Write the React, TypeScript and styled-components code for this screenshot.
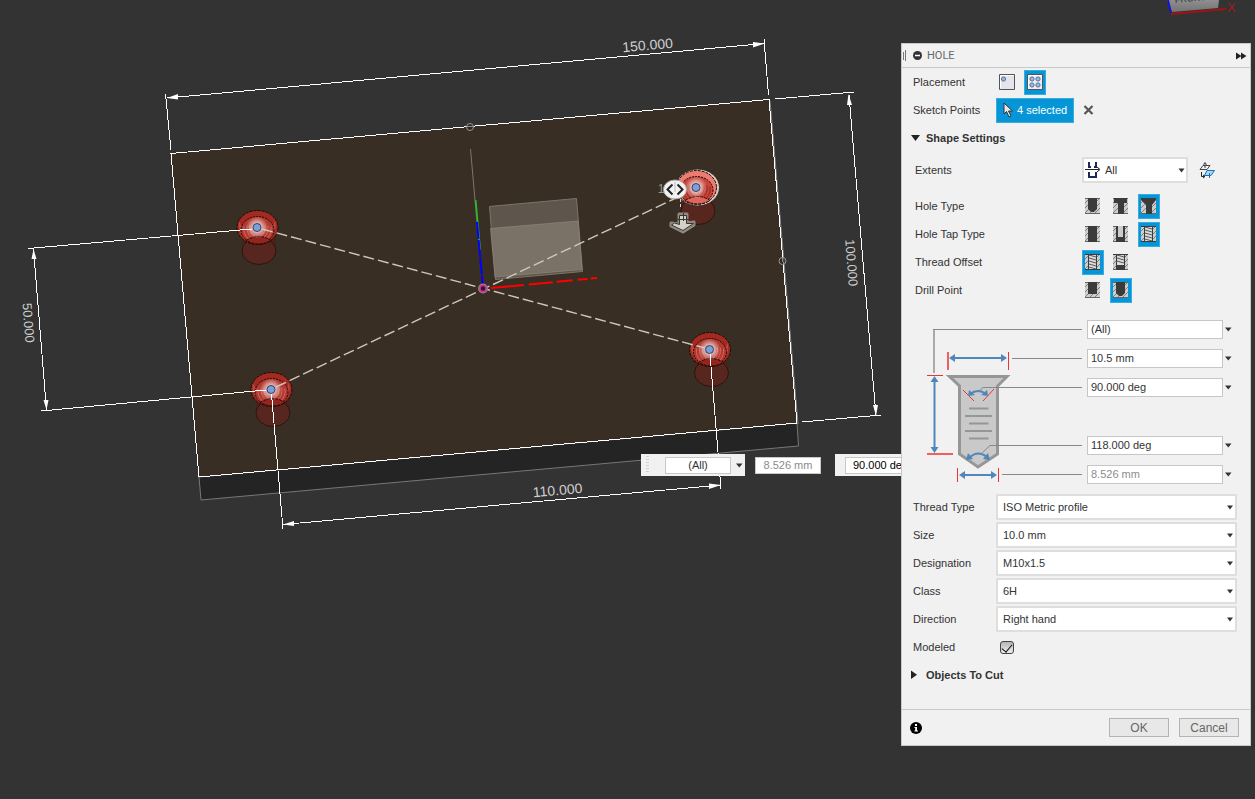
import React, { useState } from "react";
import styled, { createGlobalStyle, css } from "styled-components";

const GlobalStyle = createGlobalStyle`
  * { box-sizing: border-box; }
  body { margin: 0; background: #333; overflow: hidden; }
  body, button, input, select {
    font-family: "Liberation Sans", Arial, sans-serif;
    font-size: 11px;
    color: #333;
  }
`;

const blue = "#0696d7";

const Workspace = styled.main`
  position: relative;
  min-height: 100vh;
  overflow: hidden;
  background: #333;
`;

const Scene = styled.svg`
  display: block;
  width: 100%;
  height: 100vh;
`;

/* Floating value boxes on the canvas */

const FloatingValues = styled.div`
  position: absolute;
  left: 641px;
  top: 454px;
  display: flex;
  gap: 10px;
`;

const ValueChip = styled.div<{ $bare?: boolean }>`
  display: flex;
  align-items: center;
  height: 22px;
  padding-right: ${(p) => (p.$bare ? 4 : 3)}px;
  background: ${(p) => (p.$bare ? "transparent" : "#f1f1f1")};
`;

const ChipGrip = styled.span`
  width: 3px;
  height: 18px;
  margin: 0 16px 0 5px;
  background: repeating-linear-gradient(#d0d0d0 0 1px, #f1f1f1 1px 3px);
`;

const ChipInput = styled.input<{ $muted?: boolean; $lead?: boolean }>`
  width: 66px;
  height: 17px;
  padding: 0 0 1px;
  border: 1px solid #c8c8c8;
  background: #fff;
  text-align: center;
  color: ${(p) => (p.$muted ? "#8c8c8c" : "#333")};
  ${(p) =>
    p.$lead &&
    css`
      width: 80px;
      margin-left: 10px;
      padding-left: 7px;
      text-align: left;
      color: #000;
    `}
`;

const ArrowButton = styled.button`
  display: flex;
  align-items: center;
  justify-content: center;
  width: 11px;
  height: 19px;
  padding: 0;
  border: 0;
  background: none;
`;

const ChipArrow = styled(ArrowButton)`
  width: 16px;
  margin-right: -5px;
`;

/* Panel */

const Panel = styled.section`
  position: absolute;
  top: 43px;
  right: 4px;
  width: 350px;
  border: 1px solid #c8c8c8;
  background: #f1f1f1;
`;

const PanelHeader = styled.header`
  display: flex;
  align-items: center;
  height: 24px;
  padding: 0 3px 0 1px;
  border-bottom: 1px solid #c8c8c8;
`;

const PanelTitle = styled.h1`
  flex: 1;
  margin: 0 0 0 4px;
  font: 11px Roboto, sans-serif;
  color: #666;
`;

const IconButton = styled.button`
  display: flex;
  padding: 0;
  border: 0;
  background: none;
`;

const CollapseButton = styled(IconButton)`
  margin-left: 6px;
`;

const ClearButton = styled(IconButton)`
  margin-left: 3px;
`;

const Row = styled.div<{ $wide?: boolean }>`
  display: grid;
  grid-template-columns: ${(p) => (p.$wide ? "168px" : "84px")} 1fr;
  align-items: center;
  height: 28px;
  padding: 0 13px 0 ${(p) => (p.$wide ? 12 : 10)}px;
`;

const RowLabel = styled.label`
  padding-left: 1px;
`;

const Controls = styled.div`
  display: flex;
  align-items: center;
  gap: 6px;
`;

const ExtentsControls = styled(Controls)`
  gap: 11px;
`;

const Toggle = styled.button<{ $on?: boolean }>`
  display: flex;
  align-items: center;
  width: 22px;
  height: 25px;
  padding: 0 0 0 2px;
  border: 1px solid ${(p) => (p.$on ? "#38acdf" : "transparent")};
  background: ${(p) => (p.$on ? blue : "transparent")};
`;

const Selection = styled.button`
  display: flex;
  align-items: center;
  gap: 4px;
  width: 78px;
  height: 25px;
  padding: 0 5px 0 6px;
  border: 1px solid #38acdf;
  background: ${blue};
  color: #fff;
  white-space: nowrap;
`;

const SectionHead = styled.button`
  display: flex;
  align-items: center;
  gap: 4px;
  width: 100%;
  height: 28px;
  padding: 0 8px;
  border: 0;
  background: none;
  font-weight: bold;
`;

const ExtentsBlock = styled.div`
  padding: 4px 0 8px;
`;

const SelectFrame = styled.div<{ $short?: boolean }>`
  position: relative;
  width: ${(p) => (p.$short ? "106px" : "100%")};
  & > svg {
    position: absolute;
    pointer-events: none;
  }
`;

const SelectBox = styled.select<{ $short?: boolean }>`
  appearance: none;
  display: block;
  width: 100%;
  height: 26px;
  padding: 0 16px 0 ${(p) => (p.$short ? 21 : 5)}px;
  border: 2px solid #dedede;
  border-radius: 1px;
  background: #fff;
`;

const SelectArrow = styled.svg`
  right: 3px;
  top: 11px;
`;

const ExtentsGlyph = styled.svg`
  left: 3px;
  top: 4px;
`;

const Dimensions = styled.div`
  display: grid;
  grid-template-columns: 185px 1fr;
  height: 189px;
`;

const FieldColumn = styled.div`
  display: flex;
  flex-direction: column;
  gap: 10px;
  padding-top: 16px;
`;

const Field = styled.div<{ $gap?: boolean }>`
  display: flex;
  align-items: center;
  margin-top: ${(p) => (p.$gap ? 29 : 0)}px;
`;

const FieldInput = styled.input<{ $muted?: boolean }>`
  width: 136px;
  height: 19px;
  padding: 0 3px 1px;
  border: 1px solid #c6c6c6;
  background: #fff;
  color: ${(p) => (p.$muted ? "#8c8c8c" : "#333")};
`;

const CheckBox = styled.input`
  appearance: none;
  display: grid;
  place-items: center;
  width: 14px;
  height: 13px;
  margin: 0 0 0 4px;
  border: 1px solid #444;
  border-radius: 3px;
  background: linear-gradient(#b5b5b5, #eee);
  &:checked::after {
    content: "";
    width: 5px;
    height: 9px;
    border: solid #111;
    border-width: 0 1px 1px 0;
    transform: rotate(40deg);
  }
`;

const PanelFooter = styled.footer`
  display: flex;
  align-items: center;
  gap: 10px;
  height: 36px;
  margin-top: 20px;
  padding: 0 11px 0 8px;
  border-top: 1px solid #c8c8c8;
`;

const InfoButton = styled(IconButton)`
  margin-right: auto;
`;

const ActionButton = styled.button`
  width: 60px;
  height: 19px;
  padding: 0;
  border: 1px solid #b4b4b4;
  background: #e8e8e8;
  font-size: 12px;
  line-height: 16px;
  color: #666;
`;

const DownArrow = () => (
  <svg width="7" height="5" viewBox="0 0 7 5" aria-hidden="true">
    <path d="M0 0.500H6.500L3.250 4.500Z" fill="#333" />
  </svg>
);

type HoleKind =
  | "simple" | "counterbore" | "countersink"
  | "plain" | "clearance" | "threaded"
  | "partial" | "flat" | "angled";

const cavities: Record<HoleKind, string> = {
  simple: "M3 0H12V11L9 14H6L3 11Z",
  counterbore: "M1 0H14V5H11V16H5V5H1Z",
  countersink: "M0 0H15V2L11 7V16H5V7L0 2Z",
  plain: "M3 0H12V16H3Z",
  clearance: "M3 0H12V16H3Z",
  threaded: "",
  partial: "M3 11H12V16H3Z",
  flat: "M3 0H12V12H3Z",
  angled: "M3 0H12V11L9 14H6L3 11Z",
};

function HoleIcon({ kind }: { kind: HoleKind }) {
  const threaded = kind === "threaded" || kind === "partial";
  const depth = kind === "partial" ? 11 : 16;
  return (
    <svg width="15" height="16" viewBox="0 0 15 16" aria-hidden="true">
      <path d="M0 0H15V16H0Z" fill="#cdcdcd" />
      <path d="M-1 6L5 0M-1 11L10 0M-1 16L15 0M4 16L15 5M9 16L15 10" stroke="#777" strokeWidth=".9" />
      <path d="M0 .5H15M0 15.500H15" stroke="#666" />
      <path d={cavities[kind]} fill="#3b3b3b" />
      {kind === "clearance" && <path d="M5 0H10V11H5Z" fill="#cbcbcb" />}
      {threaded && (
        <>
          <path d={`M3 0H12V${depth}H3Z`} fill="#dcdcdc" />
          <path
            d={kind === "threaded" ? "M4 1L11 3M4 4L11 6M4 7L11 9M4 10L11 12M4 13L11 15" : "M4 1L11 3M4 4L11 6M4 7L11 9"}
            stroke="#555"
          />
          <path d={`M3.500 0V${depth}M11.500 0V${depth}`} stroke="#3b3b3b" />
          <path d={kind === "threaded" ? "M0 .5H15M0 15.500H15" : "M0 .5H15"} stroke="#3b3b3b" />
        </>
      )}
    </svg>
  );
}

function ToggleRow({ label, options, initial }: { label: string; options: HoleKind[]; initial: HoleKind }) {
  const [value, setValue] = useState(initial);
  return (
    <Row $wide role="group" aria-label={label}>
      <RowLabel as="span">{label}</RowLabel>
      <Controls>
        {options.map((o) => (
          <Toggle key={o} $on={o === value} aria-pressed={o === value} aria-label={o} onClick={() => setValue(o)}>
            <HoleIcon kind={o} />
          </Toggle>
        ))}
      </Controls>
    </Row>
  );
}

function PlacementIcon({ multiple }: { multiple?: boolean }) {
  const dots = multiple ? [[5, 5], [11, 5], [5, 11], [11, 11]] : [[4.5, 5]];
  return (
    <svg width="16" height="16" viewBox="0 0 16 16" aria-hidden="true">
      <path d="M.5 .5H15.500V15.500H.5Z" fill={multiple ? "#ececf2" : "#e3e4ec"} stroke="#555" />
      <path d="M1.500 14.500V1.500H14.500" fill="none" stroke="#fff" />
      {dots.map(([x, y]) => (
        <circle key={`${x}-${y}`} cx={x} cy={y} r="2.100" fill="#9db9e0" stroke="#56719c" />
      ))}
    </svg>
  );
}

function HoleDiagram() {
  return (
    <svg width="185" height="189" viewBox="902 304 185 189" fill="none" aria-hidden="true">
      <path d="M949.500 376.500H1007L997.500 386V454L978 467L959.500 454V386Z" fill="#c9c9c9" stroke="#969696" strokeWidth="3" />
      <path d="M969 408.500H988.500M965 416H992M969 423.500H988.500M965 431H992M969 438.500H988.500" stroke="#969696" strokeWidth="2" />
      <path d="M934 373V329" stroke="#aaa" strokeWidth="2" />
      <path d="M933 329.500H1082M1012 358.500H1082M979 391L983 387.500H1082M982 453L990 445.500H1082M1002 474.500H1082" stroke="#888" />
      <g stroke="#e33">
        <path d="M927 375.500H943M1008.500 352V370M957.500 468V482M998.500 468V482M963 390L974 401M994 389L983 401" />
        <path d="M948 352V370M927 454H953" stroke="#f06060" strokeWidth="2" />
      </g>
      <g stroke="#4f87ba" strokeWidth="2">
        <path d="M951 358H1004M934.500 380V449M962 475H994M970 394Q978 388 986 394M970 457Q978 450 987 457" />
      </g>
      <path
        fill="#4f87ba"
        d="M949 358L955 354V362ZM1007 358L1001 354V362ZM934.500 376L930.500 382H938.500ZM934.500 453L930.500 447H938.500ZM959 475L965 471V479ZM997 475L991 471V479ZM968 396L969 390L975 395ZM988 396L987 390L981 395ZM966 460L968 453L973 459ZM990 460L988 453L983 459Z"
      />
    </svg>
  );
}

function ValueField({ label, value, muted, gap }: { label: string; value: string; muted?: boolean; gap?: boolean }) {
  return (
    <Field $gap={gap}>
      <FieldInput aria-label={label} defaultValue={value} $muted={muted} />
      <ArrowButton aria-label={`${label} options`}><DownArrow /></ArrowButton>
    </Field>
  );
}

function SelectRow({ id, label, value }: { id: string; label: string; value: string }) {
  return (
    <Row>
      <RowLabel htmlFor={id}>{label}</RowLabel>
      <SelectFrame>
        <SelectBox id={id}><option>{value}</option></SelectBox>
        <SelectArrow width="7" height="5" viewBox="0 0 7 5"><path d="M0 .5H6L3 4.500Z" fill="#333" /></SelectArrow>
      </SelectFrame>
    </Row>
  );
}

/* One drilled hole, drawn around the sketch point at its centre */
function Hole({ x, y, active }: { x: number; y: number; active?: boolean }) {
  return (
    <g transform={`translate(${x} ${y})`}>
      <path d="M-15 8V24H19V8Z" fill="#4a211c" opacity=".75" />
      <ellipse cx="2" cy="23.500" rx="17" ry="13.500" fill="#57261f" stroke="#2e1310" />
      {active && <ellipse cx="1.500" cy="0" rx="22" ry="18.500" fill="#d9ccc0" stroke="#3a2a22" />}
      <ellipse cx="0.500" cy="0" rx={active ? 20 : 20.5} ry="17" fill={active ? "#ee7b70" : "#a32a20"} stroke="#160b09" strokeDasharray="3 1" />
      {!active && <path d="M-18 -6Q-20 7 -8 14L-13 3ZM18 -7Q21 7 9 14L15 2Z" fill="#bd4a40" />}
      <ellipse cx="0.500" cy="2.500" rx="16.500" ry="13.500" fill={active ? "#c8443a" : "#b33930"} stroke="#160b09" strokeDasharray="2 1" />
      <path
        d="M-13 -1Q-14 7 -8 12M-10 -2Q-11 6 -5 11M-7 -2Q-8 5 -2 9M14 -1Q15 7 9 12M11 -2Q12 6 6 11M8 -2Q9 5 3 9"
        fill="none" stroke={active ? "#97241c" : "#d0675e"}
      />
      <path d="M-11 13Q2 5 14 13Q2 20 -11 13Z" fill={active ? "#e0665b" : "#94241c"} stroke="#160b09" strokeDasharray="3 1" />
      <circle r="11" fill="url(#pointGlow)" />
      <circle r="4" fill="#7b9fdc" stroke="#34435f" />
    </g>
  );
}

function ModelScene() {
  return (
    <Scene viewBox="0 0 1255 799" preserveAspectRatio="xMinYMin slice" role="img" aria-label="Plate with four holes">
      <defs>
        <radialGradient id="pointGlow">
          <stop offset="0.300" stopColor="#fff" stopOpacity=".75" />
          <stop offset="1" stopColor="#fff" stopOpacity="0" />
        </radialGradient>
        <linearGradient id="cubeFace" x1="0" y1="0" x2="0" y2="1">
          <stop offset="0" stopColor="#8f8f8f" />
          <stop offset="1" stopColor="#747474" />
        </linearGradient>
      </defs>

      <path d="M199 477L797 423L798.500 446L201 500Z" fill="#242424" stroke="#777" />
      <path d="M171 153.500L769 99.500L797 423L199 477Z" fill="#382e24" />
      <path d="M770 101L798 424" stroke="#8a8a8a" />
      <g shapeRendering="crispEdges">
        <path d="M171 153.500L769 99.500L797 423L199 477Z" fill="none" stroke="#fff" />
      </g>

      <path d="M489.500 206.500L576.500 198.500L582.500 271.500L495.500 279.500Z" fill="#5e564c" stroke="#7b746b" />
      <path d="M490.500 228.500L578 221L582 269.500L495 277Z" fill="#7a7167" stroke="#8f877c" strokeWidth=".7" />

      <path d="M470.500 149L475 200" stroke="#7d766d" />
      <path d="M475.500 200L480 250" stroke="#35b335" strokeWidth="2" />
      <path d="M477 222L483 288" stroke="#00f" strokeWidth="2" strokeDasharray="17 1" />
      <path d="M491 288L597 278" stroke="#f00" strokeWidth="2" strokeDasharray="33 5 24 4 16 5 10 3" />

      <Hole x={257} y={227.5} />
      <Hole x={271} y={389.5} />
      <Hole x={709.5} y={349.5} />
      <Hole x={696} y={187.5} active />

      <path d="M262 229L705 348M276 387L674 199" stroke="#cfc8be" strokeWidth="1.400" strokeDasharray="11 4" />
      <circle cx="483" cy="288.500" r="5" fill="#8b8580" />
      <circle cx="483" cy="288.500" r="3" fill="#222" stroke="#e222a6" strokeWidth="1.500" />

      <g stroke="#fff" fill="none" shapeRendering="crispEdges">
        <path d="M171 150L165.500 94M768.500 95L764 39M167 98L765 43.500" />
        <path d="M775 99L854 92M849 95L876 416M802 422L881 415" />
        <path d="M28 248.500L252 229M33.500 249L46.500 410M41 411L266 390" />
        <path d="M271.500 394L283 529M710 354L721 489M283 524.500L721 485" />
      </g>
      <path
        fill="#fff"
        d="M167 98L178 94V99.500ZM765 43.500L753 42V47.500ZM848.500 94L847 105H852ZM876 416L873 405H878ZM33.500 249L31.500 259H36.500ZM46.500 410L43.500 400H48.500ZM283 524.500L294 521V526ZM721 485L709 483.500V489Z"
      />
      <g fill="#222" fillOpacity=".5" stroke="#999">
        <circle cx="470" cy="127" r="3.500" />
        <circle cx="782.500" cy="261" r="3.500" />
      </g>

      <g fill="#cfcfcf" fontSize="14" textAnchor="middle" fontFamily="Liberation Sans, Arial, sans-serif">
        <text transform="translate(648 50) rotate(-5)">150.000</text>
        <text transform="translate(558 495) rotate(-5)">110.000</text>
        <text transform="translate(24 323) rotate(86)" fontSize="13">50.000</text>
        <text transform="translate(847 263) rotate(86)" fontSize="13">100.000</text>
        <text x="661" y="193" fontSize="12" fill="#999">1</text>
      </g>

      <g>
        <ellipse cx="675" cy="189.500" rx="11.500" ry="9.500" fill="#f2f2f2" stroke="#aaa" />
        <path d="M672.500 184.500L667.500 189.500L672.500 194.500M677.500 184.500L682.500 189.500L677.500 194.500" fill="none" stroke="#222" strokeWidth="2" />
        <path d="M675 182V192" stroke="#bbb" />
        <path d="M680.500 199V208" stroke="#d9ccc0" strokeDasharray="3 2" />
        <path d="M679 214H687V223L694 222V225L683 232L671 226V223L679 224Z" fill="#8e8982" stroke="#8e8982" strokeWidth="3" strokeLinejoin="round" />
        <path d="M679.500 215.500H686.500V223.500H693.500L683 230.500L671.500 225L674.500 223L679.500 224.500Z" fill="#d3d0ca" stroke="#3b362f" />
        <path d="M683.500 213V221M677 219.500H689" stroke="#3b362f" />
      </g>

      <path d="M1167 0H1219L1218 8L1172 12Z" fill="url(#cubeFace)" />
      <path d="M1168 0L1171 13" stroke="#1414d8" strokeWidth="2" />
      <path d="M1171 14L1226 9" stroke="#a31212" strokeWidth="2" />
      <g fontFamily="Liberation Sans, Arial, sans-serif">
        <text transform="translate(1175 3) rotate(-5)" fontSize="9" fontWeight="bold" fill="#4d525b">FRONT</text>
        <text x="1227" y="12" fontSize="13" fill="#a31c1c">X</text>
      </g>
    </Scene>
  );
}

export default function App() {
  return (
    <>
      <GlobalStyle />
      <Workspace>
        <ModelScene />

        <FloatingValues>
          <ValueChip>
            <ChipGrip />
            <ChipInput aria-label="Extent" defaultValue="(All)" />
            <ChipArrow aria-label="Extent options"><DownArrow /></ChipArrow>
          </ValueChip>
          <ValueChip $bare>
            <ChipInput aria-label="Hole diameter" defaultValue="8.526 mm" $muted />
          </ValueChip>
          <ValueChip>
            <ChipInput aria-label="Countersink angle" defaultValue="90.000 deg" $lead />
          </ValueChip>
        </FloatingValues>

        <Panel aria-label="Hole">
          <PanelHeader>
            <svg width="4" height="14" viewBox="0 0 4 14" aria-hidden="true">
              <path d="M.5 3V11M2.500 1V12" stroke="#777" />
            </svg>
            <CollapseButton aria-label="Collapse">
              <svg width="10" height="10" viewBox="0 0 10 10">
                <circle cx="4.500" cy="4.500" r="4.500" fill="#333" />
                <path d="M2 4.500H7" stroke="#fff" strokeWidth="1.500" />
              </svg>
            </CollapseButton>
            <PanelTitle>HOLE</PanelTitle>
            <IconButton aria-label="Dock panel">
              <svg width="11" height="8" viewBox="0 0 11 8"><path d="M0 .5L5.500 4L0 7.500ZM5 .5L10.500 4L5 7.500Z" fill="#222" /></svg>
            </IconButton>
          </PanelHeader>

          <Row role="group" aria-label="Placement">
            <RowLabel as="span">Placement</RowLabel>
            <Controls>
              <Toggle aria-label="Single hole"><PlacementIcon /></Toggle>
              <Toggle $on aria-label="From sketch points"><PlacementIcon multiple /></Toggle>
            </Controls>
          </Row>
          <Row>
            <RowLabel htmlFor="points">Sketch Points</RowLabel>
            <Controls>
              <Selection id="points">
                <svg width="10" height="16" viewBox="0 0 10 16" aria-hidden="true">
                  <path d="M1 1V12L3.500 9.500L6 15L8 14L5.500 9H9.500Z" fill="#e8e8e8" stroke="#333" />
                </svg>
                4 selected
              </Selection>
              <ClearButton aria-label="Clear selection">
                <svg width="11" height="10" viewBox="0 0 11 10"><path d="M1.500 1L9.500 9M9.500 1L1.500 9" stroke="#555" strokeWidth="2.200" /></svg>
              </ClearButton>
            </Controls>
          </Row>
          <SectionHead aria-expanded="true">
            <svg width="12" height="10" viewBox="0 0 12 10" aria-hidden="true"><path d="M1 2H10L5.500 8Z" fill="#222" /></svg>
            Shape Settings
          </SectionHead>

          <ExtentsBlock>
            <Row $wide>
              <RowLabel htmlFor="extents">Extents</RowLabel>
              <ExtentsControls>
                <SelectFrame $short>
                  <SelectBox id="extents" $short><option>All</option></SelectBox>
                  <ExtentsGlyph width="17" height="18" viewBox="0 0 17 18">
                    <path d="M4 1V6H6M11 1V6H9M4 11V16H11V11" fill="none" stroke="#1b2b55" strokeWidth="2" />
                    <path d="M0 8.500H14M12 6L15 8.500L12 11" fill="none" stroke="#222" />
                  </ExtentsGlyph>
                  <SelectArrow width="7" height="5" viewBox="0 0 7 5"><path d="M.5 .5H6.500L3.500 4.500Z" fill="#333" /></SelectArrow>
                </SelectFrame>
                <IconButton aria-label="Flip direction">
                  <svg width="17" height="17" viewBox="0 0 17 17" fill="none">
                    <path d="M4 3.500H11L8 7.500H1ZM6 6V1M4.500 2.500L6 .5L7.500 2.500" stroke="#444" />
                    <path d="M8 8.500H15.500L12 13.500H5.500Z" fill="#a9d8f2" stroke="#1c6fb8" />
                    <path d="M10.500 11V16" stroke="#1c6fb8" />
                    <path d="M2.500 10V14.500H5M4 13L6 14.500L4 16" stroke="#222" />
                  </svg>
                </IconButton>
              </ExtentsControls>
            </Row>
          </ExtentsBlock>

          <ToggleRow label="Hole Type" options={["simple", "counterbore", "countersink"]} initial="countersink" />
          <ToggleRow label="Hole Tap Type" options={["plain", "clearance", "threaded"]} initial="threaded" />
          <ToggleRow label="Thread Offset" options={["threaded", "partial"]} initial="threaded" />
          <ToggleRow label="Drill Point" options={["flat", "angled"]} initial="angled" />

          <Dimensions>
            <HoleDiagram />
            <FieldColumn>
              <ValueField label="Depth" value="(All)" />
              <ValueField label="Countersink diameter" value="10.5 mm" />
              <ValueField label="Countersink angle" value="90.000 deg" />
              <ValueField label="Tip angle" value="118.000 deg" gap />
              <ValueField label="Diameter" value="8.526 mm" muted />
            </FieldColumn>
          </Dimensions>

          <SelectRow id="thread-type" label="Thread Type" value="ISO Metric profile" />
          <SelectRow id="size" label="Size" value="10.0 mm" />
          <SelectRow id="designation" label="Designation" value="M10x1.5" />
          <SelectRow id="class" label="Class" value="6H" />
          <SelectRow id="direction" label="Direction" value="Right hand" />
          <Row>
            <RowLabel htmlFor="modeled">Modeled</RowLabel>
            <CheckBox id="modeled" type="checkbox" defaultChecked />
          </Row>
          <SectionHead aria-expanded="false">
            <svg width="12" height="10" viewBox="0 0 12 10" aria-hidden="true"><path d="M1 .5V9L7 4.750Z" fill="#222" /></svg>
            Objects To Cut
          </SectionHead>

          <PanelFooter>
            <InfoButton aria-label="Information">
              <svg width="12" height="12" viewBox="0 0 12 12">
                <circle cx="6" cy="6" r="6" fill="#000" />
                <path d="M5 2H7V4H5ZM4.500 5H7V8.500H8V9.500H4.500V8.500H5.200V6H4.500Z" fill="#fff" />
              </svg>
            </InfoButton>
            <ActionButton>OK</ActionButton>
            <ActionButton>Cancel</ActionButton>
          </PanelFooter>
        </Panel>
      </Workspace>
    </>
  );
}
